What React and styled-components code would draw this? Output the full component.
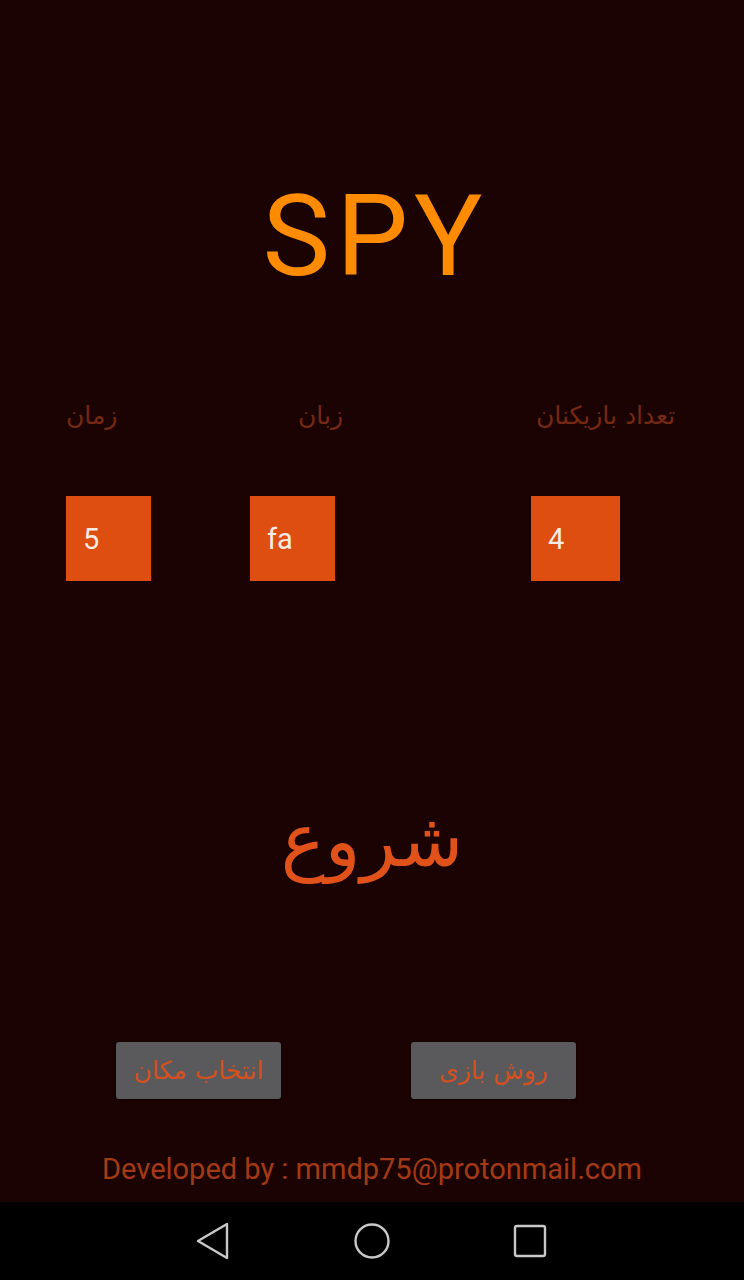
import React from "react";
import styled, { createGlobalStyle } from "styled-components";

const GlobalStyle = createGlobalStyle`
  html, body {
    margin: 0;
    padding: 0;
    background: #000;
  }
  body {
    font-family: Roboto, "Liberation Sans", sans-serif;
  }
`;

const Screen = styled.div`
  width: 744px;
  height: 1280px;
  display: flex;
  flex-direction: column;
  overflow: hidden;
`;

const Content = styled.div`
  height: 1202px;
  background: #1a0302;
  display: flex;
  flex-direction: column;
  align-items: center;
`;

const Title = styled.h1`
  margin: 166px 0 0;
  padding-left: 7px;
  font-family: Roboto, "Liberation Sans", sans-serif;
  font-weight: 400;
  font-size: 114px;
  line-height: 140px;
  color: #ff8c00;
  letter-spacing: 6px;
`;

const Options = styled.div`
  align-self: stretch;
  margin-top: 94px;
  padding-left: 66px;
  display: grid;
  grid-template-columns: 184px 281px 1fr;
`;

const Option = styled.div`
  display: flex;
  flex-direction: column;
  align-items: flex-start;
`;

const Label = styled.span`
  direction: rtl;
  margin-left: ${({ offset }) => offset || 0}px;
  font-family: "DejaVu Sans", sans-serif;
  font-size: 25px;
  line-height: 32px;
  color: #762812;
`;

const ValueBox = styled.div`
  margin-top: 64px;
  width: ${({ w }) => w || 85}px;
  height: 85px;
  box-sizing: border-box;
  padding-left: 17px;
  background: #dd4e10;
  display: flex;
  align-items: center;
  font-family: Roboto, sans-serif;
  font-size: 29px;
  color: #f6ece4;
`;

const Start = styled.button`
  margin-top: 204px;
  background: none;
  border: none;
  padding: 0;
  direction: rtl;
  font-family: "DejaVu Sans", sans-serif;
  font-size: 74px;
  line-height: 110px;
  color: #e0521a;
  cursor: pointer;
`;

const ButtonRow = styled.div`
  margin-top: 147px;
  align-self: stretch;
  padding-left: 116px;
  display: flex;
  gap: 130px;
`;

const GrayButton = styled.button`
  width: 165px;
  height: 57px;
  border: none;
  border-radius: 3px;
  background: #5a5a5c;
  direction: rtl;
  font-family: "DejaVu Sans", sans-serif;
  font-size: 25px;
  color: #d4501e;
  padding: 0;
  box-shadow: 0 1px 2px rgba(0, 0, 0, 0.6);
`;

const Footer = styled.p`
  margin: 52px 0 0;
  font-family: Roboto, sans-serif;
  font-size: 29px;
  line-height: 36px;
  color: #a43a14;
`;

const NavBar = styled.div`
  height: 78px;
  background: #000;
  display: flex;
  justify-content: center;
  align-items: center;
  gap: 104px;
`;

const NavIcon = styled.svg`
  width: 54px;
  height: 54px;
  fill: none;
  stroke: #c8c8c8;
  stroke-width: 2.4;
  stroke-linejoin: round;
`;

export default function App() {
  return (
    <Screen>
      <GlobalStyle />
      <Content>
        <Title>SPY</Title>
        <Options>
          <Option>
            <Label>زمان</Label>
            <ValueBox>5</ValueBox>
          </Option>
          <Option>
            <Label offset={48}>زبان</Label>
            <ValueBox>fa</ValueBox>
          </Option>
          <Option>
            <Label offset={5}>تعداد بازیکنان</Label>
            <ValueBox w={89}>4</ValueBox>
          </Option>
        </Options>
        <Start>شروع</Start>
        <ButtonRow>
          <GrayButton>انتخاب مکان</GrayButton>
          <GrayButton>روش بازی</GrayButton>
        </ButtonRow>
        <Footer>Developed by : mmdp75@protonmail.com</Footer>
      </Content>
      <NavBar>
        <NavIcon viewBox="0 0 54 54">
          <path d="M40 10 L40 44 L11 27 Z" />
        </NavIcon>
        <NavIcon viewBox="0 0 54 54">
          <circle cx="27" cy="27" r="16.5" />
        </NavIcon>
        <NavIcon viewBox="0 0 54 54">
          <rect x="12" y="12" width="30" height="30" rx="2" />
        </NavIcon>
      </NavBar>
    </Screen>
  );
}
